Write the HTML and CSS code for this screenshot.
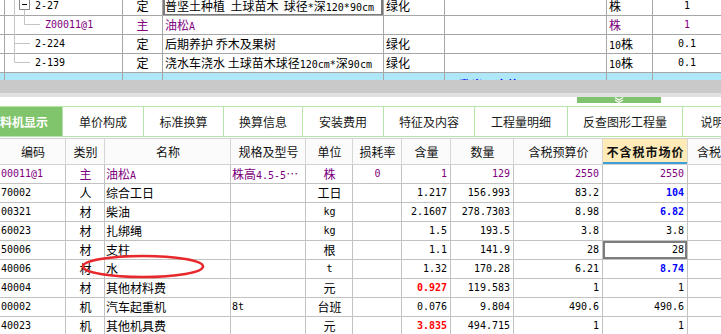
FILE: index.html
```html
<!DOCTYPE html>
<html lang="zh-CN">
<head>
    <meta charset="UTF-8">
    <meta name="viewport" content="width=device-width, initial-scale=1.0">
    <title>工料机显示</title>
    <link rel="stylesheet" href="styles.css">
</head>
<body>
    <!-- 上方定额列表 -->
    <div class="top-pane">
        <div class="tg">
            <div class="tg-row">
                <div class="tg-cell"></div>
                <div class="tg-cell code n">2-27</div>
                <div class="tg-cell center">定</div>
                <div class="tg-cell current">普坚土种植&nbsp; 土球苗木&nbsp; 球径<span class="n">*</span>深<span class="n">120*90cm</span></div>
                <div class="tg-cell">绿化</div>
                <div class="tg-cell"></div>
                <div class="tg-cell">株</div>
                <div class="tg-cell center n">1</div>
            </div>
            <div class="tg-row main">
                <div class="tg-cell"></div>
                <div class="tg-cell code sub n">Z00011@1</div>
                <div class="tg-cell center">主</div>
                <div class="tg-cell">油松<span class="n">A</span></div>
                <div class="tg-cell"></div>
                <div class="tg-cell"></div>
                <div class="tg-cell">株</div>
                <div class="tg-cell center n">1</div>
            </div>
            <div class="tg-row">
                <div class="tg-cell"></div>
                <div class="tg-cell code n">2-224</div>
                <div class="tg-cell center">定</div>
                <div class="tg-cell">后期养护 乔木及果树</div>
                <div class="tg-cell">绿化</div>
                <div class="tg-cell"></div>
                <div class="tg-cell"><span class="n">10</span>株</div>
                <div class="tg-cell center n">0.1</div>
            </div>
            <div class="tg-row">
                <div class="tg-cell"></div>
                <div class="tg-cell code n">2-139</div>
                <div class="tg-cell center">定</div>
                <div class="tg-cell">浇水车浇水 土球苗木球径<span class="n">120cm*</span>深<span class="n">90cm</span></div>
                <div class="tg-cell">绿化</div>
                <div class="tg-cell"></div>
                <div class="tg-cell"><span class="n">10</span>株</div>
                <div class="tg-cell center n">0.1</div>
            </div>
            <div class="tg-row blue">
                <div class="tg-cell"></div>
                <div class="tg-cell"></div>
                <div class="tg-cell"></div>
                <div class="tg-cell"></div>
                <div class="tg-cell"></div>
                <div class="tg-cell">·乳米·冻妆</div>
                <div class="tg-cell"></div>
                <div class="tg-cell"></div>
            </div>
        </div>
    </div>

    <svg class="tree" width="50" height="72" viewBox="0 0 50 72">
        <g stroke="#c4c4c4" stroke-width="1" fill="none">
            <path d="M14.5 0 V62.5 M14.5 43.5 H30 M14.5 62.5 H30"/>
            <path d="M24.5 10 V24.5 H40"/>
        </g>
        <rect x="19.5" y="-0.5" width="10" height="10" fill="#fff" stroke="#8a8a8a"/>
        <path d="M22 4.5 H27" stroke="#000"/>
    </svg>

    <div class="splitter"></div>
    <div class="handle-row">
        <div class="handle">
            <svg width="10" height="6" viewBox="0 0 10 6">
                <path d="M1 0.5 L5 3 L9 0.5 M1 3 L5 5.5 L9 3" stroke="#fff" stroke-width="1.2" fill="none"/>
            </svg>
        </div>
    </div>

    <!-- 页签 -->
    <div class="tabs">
        <div class="tab active" style="width:89px">工料机显示</div>
        <div class="tab" style="width:81px">单价构成</div>
        <div class="tab" style="width:80px">标准换算</div>
        <div class="tab" style="width:79px">换算信息</div>
        <div class="tab" style="width:81px">安装费用</div>
        <div class="tab" style="width:91px">特征及内容</div>
        <div class="tab" style="width:93px">工程量明细</div>
        <div class="tab" style="width:115px">反查图形工程量</div>
        <div class="tab" style="width:84px">说明信息</div>
    </div>

    <!-- 工料机明细 -->
    <div class="dg">
        <div class="dg-row head">
            <div class="dg-cell center">编码</div>
            <div class="dg-cell center">类别</div>
            <div class="dg-cell center">名称</div>
            <div class="dg-cell center">规格及型号</div>
            <div class="dg-cell center">单位</div>
            <div class="dg-cell center">损耗率</div>
            <div class="dg-cell center">含量</div>
            <div class="dg-cell center">数量</div>
            <div class="dg-cell center">含税预算价</div>
            <div class="dg-cell center sorted">不含税市场价</div>
            <div class="dg-cell">含税市场价</div>
        </div>
        <div class="dg-row main">
            <div class="dg-cell code n">00011@1</div>
            <div class="dg-cell center">主</div>
            <div class="dg-cell">油松<span class="n">A</span></div>
            <div class="dg-cell">株高<span class="n">4.5-5</span>…</div>
            <div class="dg-cell center">株</div>
            <div class="dg-cell center n">0</div>
            <div class="dg-cell num n">1</div>
            <div class="dg-cell num n">129</div>
            <div class="dg-cell num n">2550</div>
            <div class="dg-cell num n">2550</div>
            <div class="dg-cell"></div>
        </div>
        <div class="dg-row">
            <div class="dg-cell code n">70002</div>
            <div class="dg-cell center">人</div>
            <div class="dg-cell">综合工日</div>
            <div class="dg-cell"></div>
            <div class="dg-cell center">工日</div>
            <div class="dg-cell"></div>
            <div class="dg-cell num n">1.217</div>
            <div class="dg-cell num n">156.993</div>
            <div class="dg-cell num n">83.2</div>
            <div class="dg-cell num n blue">104</div>
            <div class="dg-cell"></div>
        </div>
        <div class="dg-row">
            <div class="dg-cell code n">00321</div>
            <div class="dg-cell center">材</div>
            <div class="dg-cell">柴油</div>
            <div class="dg-cell"></div>
            <div class="dg-cell center n">kg</div>
            <div class="dg-cell"></div>
            <div class="dg-cell num n">2.1607</div>
            <div class="dg-cell num n">278.7303</div>
            <div class="dg-cell num n">8.98</div>
            <div class="dg-cell num n blue">6.82</div>
            <div class="dg-cell"></div>
        </div>
        <div class="dg-row">
            <div class="dg-cell code n">60023</div>
            <div class="dg-cell center">材</div>
            <div class="dg-cell">扎绑绳</div>
            <div class="dg-cell"></div>
            <div class="dg-cell center n">kg</div>
            <div class="dg-cell"></div>
            <div class="dg-cell num n">1.5</div>
            <div class="dg-cell num n">193.5</div>
            <div class="dg-cell num n">3.8</div>
            <div class="dg-cell num n">3.8</div>
            <div class="dg-cell"></div>
        </div>
        <div class="dg-row">
            <div class="dg-cell code n">50006</div>
            <div class="dg-cell center">材</div>
            <div class="dg-cell">支柱</div>
            <div class="dg-cell"></div>
            <div class="dg-cell center">根</div>
            <div class="dg-cell"></div>
            <div class="dg-cell num n">1.1</div>
            <div class="dg-cell num n">141.9</div>
            <div class="dg-cell num n">28</div>
            <div class="dg-cell num n current">28</div>
            <div class="dg-cell"></div>
        </div>
        <div class="dg-row">
            <div class="dg-cell code n">40006</div>
            <div class="dg-cell center">材</div>
            <div class="dg-cell">水</div>
            <div class="dg-cell"></div>
            <div class="dg-cell center n">t</div>
            <div class="dg-cell"></div>
            <div class="dg-cell num n">1.32</div>
            <div class="dg-cell num n">170.28</div>
            <div class="dg-cell num n">6.21</div>
            <div class="dg-cell num n blue">8.74</div>
            <div class="dg-cell"></div>
        </div>
        <div class="dg-row">
            <div class="dg-cell code n">40004</div>
            <div class="dg-cell center">材</div>
            <div class="dg-cell">其他材料费</div>
            <div class="dg-cell"></div>
            <div class="dg-cell center">元</div>
            <div class="dg-cell"></div>
            <div class="dg-cell num n red">0.927</div>
            <div class="dg-cell num n">119.583</div>
            <div class="dg-cell num n">1</div>
            <div class="dg-cell num n">1</div>
            <div class="dg-cell"></div>
        </div>
        <div class="dg-row">
            <div class="dg-cell code n">00002</div>
            <div class="dg-cell center">机</div>
            <div class="dg-cell">汽车起重机</div>
            <div class="dg-cell n">8t</div>
            <div class="dg-cell center">台班</div>
            <div class="dg-cell"></div>
            <div class="dg-cell num n">0.076</div>
            <div class="dg-cell num n">9.804</div>
            <div class="dg-cell num n">490.6</div>
            <div class="dg-cell num n">490.6</div>
            <div class="dg-cell"></div>
        </div>
        <div class="dg-row">
            <div class="dg-cell code n">40023</div>
            <div class="dg-cell center">机</div>
            <div class="dg-cell">其他机具费</div>
            <div class="dg-cell"></div>
            <div class="dg-cell center">元</div>
            <div class="dg-cell"></div>
            <div class="dg-cell num n red">3.835</div>
            <div class="dg-cell num n">494.715</div>
            <div class="dg-cell num n">1</div>
            <div class="dg-cell num n">1</div>
            <div class="dg-cell"></div>
        </div>
    </div>

    <!-- 红圈标注 -->
    <svg class="mark" width="130" height="28" viewBox="0 0 130 28">
        <ellipse cx="64" cy="13.5" rx="60" ry="10.5" fill="none" stroke="#e8282b" stroke-width="2.6"/>
    </svg>
</body>
</html>
```

FILE: styles.css
```css
body {
    margin: 0;
    width: 721px;
    height: 334px;
    overflow: hidden;
    position: relative;
    background-color: #ffffff;
    font-family: "Noto Sans CJK SC", sans-serif;
    font-size: 12px;
    color: #000;
}

.n {
    font-family: "DejaVu Sans Mono", "Liberation Mono", monospace;
    font-size: 10px;
}

.center {
    text-align: center;
}

/* 上方列表 */
.top-pane {
    height: 80px;
    overflow: hidden;
}

.tg {
    margin-top: -3px;
}

.tg-row {
    display: grid;
    grid-template-columns: 5px 118px 40px 221px 61px 162px 46px 68px;
    height: 19px;
    box-sizing: border-box;
    border-bottom: 1px solid #a6a6a6;
}

.tg-cell {
    border-right: 1px solid #a6a6a6;
    padding-left: 2px;
    line-height: 18px;
    white-space: nowrap;
    overflow: hidden;
}

.tg-cell:last-child {
    border-right: none;
}

.tg-cell.center {
    padding-left: 0;
}

.tg-cell.code {
    padding-left: 30px;
}

.tg-cell.code.sub {
    padding-left: 40px;
}

.tg-cell.current {
    box-shadow: inset 2px 0 0 #7a7a7a, inset -2px 0 0 #7a7a7a, inset 0 -1px 0 #7a7a7a;
}

.tg-row.main .tg-cell {
    color: #800080;
}

.tg-row.blue {
    background-color: #ade7f8;
}

.tg-row.blue .tg-cell {
    padding-top: 3px;
}

.tree {
    position: absolute;
    left: 0;
    top: 0;
}

/* 分隔条 */
.splitter {
    height: 13px;
    background-color: #c9c9c9;
    border-bottom: 4px solid #e1e1e1;
}

.handle-row {
    height: 9px;
}

.handle {
    margin-left: 577px;
    width: 84px;
    height: 6px;
    background-color: #80c36e;
    display: flex;
    justify-content: center;
}

/* 页签 */
.tabs {
    display: flex;
    height: 31px;
    margin-left: -26px;
    box-sizing: border-box;
    border-top: 1px solid #b7e4a8;
    border-bottom: 1px solid #b7e4a8;
}

.tab {
    flex-shrink: 0;
    box-sizing: border-box;
    border-right: 1px solid #b7e4a8;
    text-align: center;
    line-height: 29px;
    color: #1a1a1a;
}

.tab.active {
    background-color: #80c46c;
    color: #ffffff;
    font-weight: bold;
}

/* 工料机明细 */
.dg {
    margin-top: 1px;
}

.dg-row {
    display: grid;
    grid-template-columns: 66px 39px 126px 75px 47px 49px 49px 63px 89px 85px 69px;
    height: 19px;
    box-sizing: border-box;
    border-bottom: 1px solid #c2c2c2;
}

.dg-cell {
    border-right: 1px solid #c2c2c2;
    padding-left: 1px;
    line-height: 18px;
    white-space: nowrap;
    overflow: hidden;
}

.dg-cell:last-child {
    border-right: none;
}

.dg-cell.num {
    text-align: right;
    padding-right: 3px;
}

.dg-row.head {
    height: 27px;
    background-color: #fbfbfb;
    border-top: 1px solid #d2d2d2;
    border-bottom: 1px solid #d2d2d2;
}

.dg-row.head .dg-cell {
    line-height: 25px;
    border-right-color: #d6d6d6;
    color: #111;
}

.dg-row.head .dg-cell:last-child {
    padding-left: 9px;
}

.dg-row.head .sorted {
    background-color: #feebb7;
    font-weight: bold;
    letter-spacing: 1px;
    box-shadow: inset 0 -2px 0 #3d9fd8;
}

.dg-row.main .dg-cell {
    color: #800080;
}

.blue {
    color: #0000ff;
    font-weight: bold;
}

.red {
    color: #ff0000;
    font-weight: bold;
}

.dg-cell.current {
    box-shadow: inset 0 0 0 2px #7d7d7d;
}

.mark {
    position: absolute;
    left: 79px;
    top: 253px;
}
```
